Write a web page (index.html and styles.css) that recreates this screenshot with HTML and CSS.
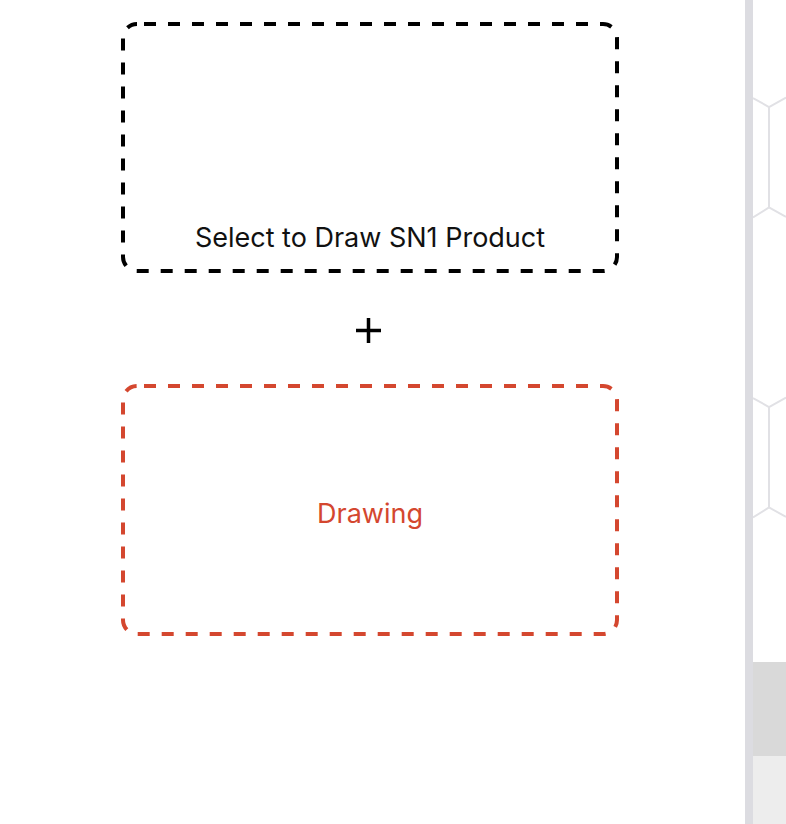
FILE: index.html
```html
<!DOCTYPE html>
<html>
<head>
<meta charset="utf-8">
<link rel="stylesheet" href="styles.css">
</head>
<body>
<div class="page">
  <main class="main">
    <div class="column">
      <div class="box box-select">
        <svg class="box-border" width="498" height="251" viewBox="0 0 498 251">
          <rect x="2" y="2" width="494" height="247" rx="14" ry="14" fill="none" stroke="#000" stroke-width="4" stroke-dasharray="12 12" stroke-dashoffset="17"/>
        </svg>
        <span class="box-label">Select to Draw SN1 Product</span>
      </div>
      <div class="plus-row">
        <svg class="plus" width="25" height="25" viewBox="0 0 25 25">
          <path d="M12.5 0 V25 M0 12.5 H25" stroke="#000" stroke-width="3.5" fill="none"/>
        </svg>
      </div>
      <div class="box box-drawing">
        <svg class="box-border" width="498" height="252" viewBox="0 0 498 252">
          <rect x="2" y="2" width="494" height="248" rx="14" ry="14" fill="none" stroke="#d4472f" stroke-width="4" stroke-dasharray="12 12" stroke-dashoffset="17"/>
        </svg>
        <span class="box-label red">Drawing</span>
      </div>
    </div>
  </main>
  <div class="divider"></div>
  <aside class="side">
    <svg class="side-art" width="33" height="662" viewBox="0 0 33 662">
      <g stroke="#e1e1e5" stroke-width="2" fill="none">
        <path d="M0 98 L16 107 L33 97.5 M16 107 V207.5 M0 217.5 L16 207.5 L33 217"/>
        <path d="M0 398 L16 407 L33 397.5 M16 407 V507.5 M0 517.5 L16 507.5 L33 517"/>
      </g>
    </svg>
    <div class="side-block"></div>
    <div class="side-foot"></div>
  </aside>
</div>
</body>
</html>
```
FILE: styles.css
```css
html, body {
  margin: 0;
  padding: 0;
  background: #fff;
}
.page {
  display: flex;
  width: 786px;
  height: 824px;
  overflow: hidden;
  font-family: Inter, "Liberation Sans", sans-serif;
}
.main {
  width: 745px;
  flex: none;
  padding: 22px 0 0 121px;
  box-sizing: border-box;
}
.column {
  width: 498px;
  display: flex;
  flex-direction: column;
}
.box {
  position: relative;
  box-sizing: border-box;
  display: flex;
  justify-content: center;
}
.box-border {
  position: absolute;
  left: 0;
  top: 0;
  display: block;
}
.box-select {
  height: 251px;
  align-items: flex-end;
  padding-bottom: 20px;
}
.box-drawing {
  height: 252px;
  align-items: center;
}
.box-label {
  position: relative;
  font-size: 27px;
  line-height: 30px;
  color: #111;
}
.box-label.red {
  color: #d4472f;
  top: 4px;
}
.plus-row {
  height: 111px;
  box-sizing: border-box;
  padding-top: 45px;
  display: flex;
  justify-content: center;
}
.plus {
  display: block;
  margin-left: -3px;
}
.divider {
  width: 8px;
  flex: none;
  background: #dcdce1;
}
.side {
  flex: 1;
  display: flex;
  flex-direction: column;
}
.side-art {
  display: block;
  flex: none;
}
.side-block {
  height: 94px;
  background: #d9d9d9;
}
.side-foot {
  flex: 1;
  background: #ededed;
}
```
